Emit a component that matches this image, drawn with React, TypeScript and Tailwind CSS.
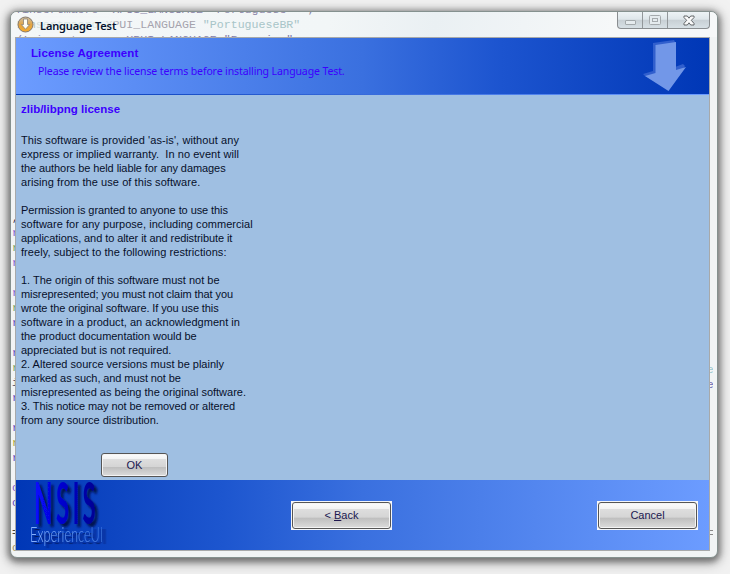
const licenseLines: [string, string][] = [
  ["This software is provided 'as-is', without any", 'tracking-[0.09px]'],
  ['express or implied warranty.  In no event will', 'tracking-[0.05px]'],
  ['the authors be held liable for any damages', 'tracking-[-0.08px]'],
  ['arising from the use of this software.', 'tracking-[0.07px]'],
  ['', ''],
  ['Permission is granted to anyone to use this', 'tracking-[-0.08px]'],
  ['software for any purpose, including commercial', 'tracking-[0.04px]'],
  ['applications, and to alter it and redistribute it', 'tracking-[-0.08px]'],
  ['freely, subject to the following restrictions:', 'tracking-[0.06px]'],
  ['', ''],
  ['1. The origin of this software must not be', 'tracking-[0px]'],
  ['misrepresented; you must not claim that you', 'tracking-[-0.09px]'],
  ['wrote the original software. If you use this', 'tracking-[-0.11px]'],
  ['software in a product, an acknowledgment in', 'tracking-[0.03px]'],
  ['the product documentation would be', 'tracking-[-0.05px]'],
  ['appreciated but is not required.', 'tracking-[-0.04px]'],
  ['2. Altered source versions must be plainly', 'tracking-[0px]'],
  ['marked as such, and must not be', 'tracking-[-0.09px]'],
  ['misrepresented as being the original software.', 'tracking-[0px]'],
  ['3. This notice may not be removed or altered', 'tracking-[-0.09px]'],
  ['from any source distribution.', 'tracking-[-0.01px]'],
];

const leftCode: [string, string][] = [
  [',', 'text-[#303050]'], ['r', 'text-[#8058d0]'], ['r', 'text-[#70a060]'], ['r', 'text-[#8058d0]'],
  ['', ''], ['r', 'text-[#8058d0]'], ['r', 'text-[#70a060]'], ['r', 'text-[#6048c0]'],
  ['', ''], ['r', 'text-[#6048c0]'], ['r', 'text-[#70a060]'], ['i', 'text-[#404060]'], ['r', 'text-[#6048c0]'],
  ['', ''], ['r', 'text-[#6048c0]'], ['r', 'text-[#a0a030]'], ['r', 'text-[#6048c0]'],
  ['', ''], ['c', 'text-[#8058d0]'], ['c', 'text-[#6048c0]'], ['', ''], ['=', 'text-[#404040]'], ['c', 'text-[#a09060]'],
];

function WizardButton({ children, className = '' }: { children: React.ReactNode; className?: string }) {
  return (
    <button
      className={`flex items-center justify-center rounded-[3px] border border-[#555] bg-[linear-gradient(#fcfcfc_0%,#f3f3f3_22%,#dedede_24%,#d5d5d5_57%,#bebebe_60%,#dcdcdc_100%)] font-['Liberation_Sans',sans-serif] text-[11px] leading-none text-[#201850] shadow-[inset_0_0_0_1px_#f4f4f4] ${className}`}
    >
      {children}
    </button>
  );
}

function TitleBar() {
  return (
    <div className="relative h-[25px] overflow-hidden rounded-t-[6px] bg-[linear-gradient(100deg,#f4f7f8_0%,#f2f6f7_45%,#eaf0f3_60%,#f6f8f9_85%)]">
      <pre className="absolute top-[-10px] left-[4px] font-['Liberation_Mono',monospace] text-[11.6px] leading-[15px] text-[#a5a3ad]">
        <div className="text-[#8985a8]">!insertmacro  XPUI_LANGUAGE "Portuguese"  ;</div>
        <div><span className="text-[#a5c0b5]">!insertmacro </span>XPUI_LANGUAGE <span className="text-[#a8c5c8]">"PortugueseBR"</span></div>
        <div className="text-[#8580ac]">/! insertmacro  XPUI_LANGUAGE "Romanian"</div>
      </pre>
      <div className="absolute top-[6px] left-[25px] h-[17px] w-[80px] rounded bg-[#f2f6f7]/70 blur-[2px]" />
      <div className="relative flex h-full items-start pl-[6px]">
        <svg className="mt-[4px] size-[17px]" viewBox="0 0 17 17">
          <defs>
            <linearGradient id="orb" x2="0" y2="1"><stop stopColor="#c9bea8" /><stop offset=".5" stopColor="#e3a544" /><stop offset="1" stopColor="#f7aa28" /></linearGradient>
          </defs>
          <circle cx="8.500" cy="8.500" r="7.500" fill="url(#orb)" stroke="#857a6e" />
          <path d="M6.500 3h4v5.500h2.200l-4.200 4.800-4.200-4.800h2.200z" fill="#fffdf3" stroke="#8b8375" strokeWidth=".8" />
        </svg>
        <span className="mt-[6px] ml-[6px] font-['Noto_Sans','Open_Sans',sans-serif] text-[11px] leading-[16px] font-semibold tracking-[-0.12px] text-[#06142e]">Language Test</span>
        <div className="mr-[7px] ml-auto flex h-[17px] w-[93px] overflow-hidden rounded-b-[4px] border border-t-0 border-[#898d90] bg-[linear-gradient(#edf3f6_0%,#dee6ea_45%,#c8d0d5_52%,#d7e0e5_100%)]">
          <span className="flex w-[25px] shrink-0 items-center justify-center border-r border-[#92979a] pt-[5px]"><i className="h-[5px] w-[11px] rounded-[1px] border border-[#a2a8ab] bg-[#e5ebee]" /></span>
          <span className="flex w-[25px] shrink-0 items-center justify-center border-r border-[#92979a]">
            <svg width="12" height="10" viewBox="0 0 12 10" fill="#e5ebee" stroke="#a5aaad"><rect x=".5" y=".5" width="11" height="9" rx="1" /><rect x="3.500" y="3.500" width="5" height="3" /></svg>
          </span>
          <span className="flex w-[41px] items-center justify-center">
            <svg width="12" height="11" viewBox="0 0 12 11"><path d="M1 1h3.300L6 3.200 7.700 1H11v1.600L8.300 5.300 11 8.400V10H7.700L6 7.800 4.300 10H1V8.400l2.700-3.100L1 2.600z" fill="#fafafa" stroke="#626669" /></svg>
          </span>
        </div>
      </div>
    </div>
  );
}

export default function App() {
  return (
    <div className="h-[574px] w-[730px] overflow-hidden bg-[#f2f2f2] pt-[11px] pl-[10px]">
      <div className="relative flex h-[547px] w-[708px] flex-col rounded-[7px] border border-[#85918f] bg-[#f1f4f5] shadow-[0_2px_6px_2px_#606060d0,0_3px_14px_2px_#80808080]">
        <TitleBar />
        <div className="pointer-events-none absolute top-[199px] left-px w-[4px] overflow-hidden font-['Liberation_Mono',monospace] text-[11px] leading-[15px]">
          {leftCode.map(([text, color], i) => <div key={i} className={`h-[15px] ${color}`}>{text}</div>)}
        </div>
        <div className="pointer-events-none absolute top-[351px] right-[4px] w-[3px] overflow-hidden font-['Liberation_Mono',monospace] text-[11px] leading-[15px]">
          <div className="-ml-[3px] text-[#9bc8ce]">e</div>
          <div className="-ml-[3px] text-[#7068b0]">e</div>
        </div>
        <div className="pointer-events-none absolute right-[4px] bottom-[22px] h-[5px] w-[3px] border-y border-[#888]" />
        <div className="relative ml-[4px] flex h-[514px] w-[695px] flex-col border border-[#a7a9aa]">
          <header className="relative h-[57px] shrink-0 bg-[linear-gradient(90deg,#6c9cff_0%,#3a70df_50%,#1c54cf_70%,#0037b6_100%)] font-['Liberation_Sans',sans-serif] text-[#3c00ff]">
            <h1 className="pt-[8px] pl-[15px] text-[11.5px] leading-[14px] font-bold"><span className="tracking-[0.1px]">License Agreement</span></h1>
            <p className="pt-[4px] pl-[22px] font-['Noto_Sans',sans-serif] text-[10.5px] leading-[15px]"><span className="tracking-[-0.11px]">Please review the license terms before installing Language Test.</span></p>
            <svg className="absolute top-[2px] right-[22px] h-[52px] w-[44px]" viewBox="0 0 44 52">
              <path d="M10 3 31 0l1 2v25l8-3 2 2-17 23L2 36l-2-2 10-3z" fill="#315fcd" />
              <path d="M12.500 5 33 2v28l10-3-17.500 24L2 36l10.500-3z" fill="#7297e8" />
            </svg>
            <i className="absolute inset-x-0 bottom-0 h-px bg-[linear-gradient(90deg,#0037b6,#6c9cff)]" />
          </header>
          <main className="h-[385px] shrink-0 bg-[#9fbfe2] px-[5px] pt-[7px] font-['Liberation_Sans',sans-serif]">
            <h2 className="text-[11.5px] leading-[14px] font-bold text-[#3c00ff]"><span>zlib/libpng license</span></h2>
            <div className="mt-[17px] text-[11px] leading-[14px] text-[#07102b]">
              {licenseLines.map(([line, tracking], i) => <div key={i} className="h-[14px] whitespace-pre"><span className={tracking}>{line}</span></div>)}
            </div>
            <WizardButton className="mt-[26px] ml-[80px] h-[24px] w-[67px]">OK</WizardButton>
          </main>
          <footer className="flex h-[70px] shrink-0 items-start bg-[linear-gradient(90deg,#0037b6_0%,#1d56cf_30%,#3a70df_50%,#6c9cff_100%)]">
            <svg className="h-[70px] w-[110px] shrink-0" viewBox="0 0 110 70">
              <defs>
                <linearGradient id="nsis"><stop stopColor="#0808ff" /><stop offset="1" stopColor="#000093" /></linearGradient>
                <linearGradient id="xui"><stop stopColor="#87b2ff" /><stop offset="1" stopColor="#3971dc" /></linearGradient>
                <filter id="shade" x="-10%" y="-10%" width="130%" height="130%"><feDropShadow dx="3" dy="1.300" stdDeviation="0.800 0.400" floodColor="#001044" floodOpacity=".9" /></filter>
              </defs>
              <text transform="translate(0 44) scale(1 2.400)" x="18 40 56.500 66.500" fontFamily="Lato, sans-serif" fontSize="24" fontWeight="700" fill="url(#nsis)" filter="url(#shade)">NSIS</text>
              <text transform="translate(14 62) scale(1 1.600)" fontFamily="Lato, sans-serif" fontSize="13" fontWeight="300" textLength="73" lengthAdjust="spacingAndGlyphs" fill="url(#xui)" filter="url(#shade)">ExperienceUI</text>
            </svg>
            <div className="mt-[21px] ml-[165px] bg-[#f4f6fa] p-px"><WizardButton className="h-[27px] w-[99px]"><span className="whitespace-pre">&lt; <u className="underline-offset-1">B</u>ack</span></WizardButton></div>
            <div className="mt-[21px] mr-[11px] ml-auto bg-[#f4f6fa] p-px"><WizardButton className="h-[27px] w-[99px]">Cancel</WizardButton></div>
          </footer>
        </div>
      </div>
    </div>
  );
}
